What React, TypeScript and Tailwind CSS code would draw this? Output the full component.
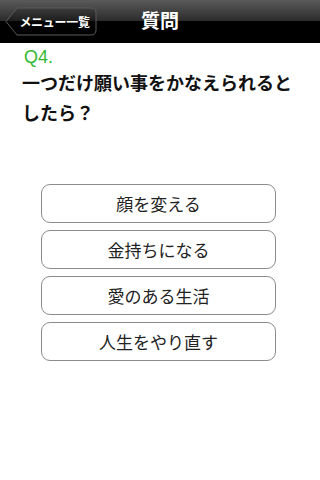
import React from "react";

const answers = ["顔を変える", "金持ちになる", "愛のある生活", "人生をやり直す"];

const font = {
  fontFamily: '"Noto Sans CJK JP", "Liberation Sans", sans-serif',
};

function BackButton() {
  return (
    <button className="relative ml-[5px] flex h-[29px] w-[92px] items-center justify-center pl-[7px]">
      <svg
        className="absolute inset-0"
        width="92"
        height="29"
        viewBox="0 0 92 29"
      >
        <defs>
          <linearGradient id="bb" x1="0" y1="0" x2="0" y2="1">
            <stop offset="0" stopColor="#3c3c3c" />
            <stop offset="0.5" stopColor="#1c1c1c" />
            <stop offset="0.5" stopColor="#050505" />
            <stop offset="1" stopColor="#000" />
          </linearGradient>
        </defs>
        <path
          d="M1 14.5 L12 1 H86 Q91 1 91 6 V23 Q91 28 86 28 H12 Z"
          fill="url(#bb)"
          stroke="#5a5a5a"
          strokeWidth="1"
        />
      </svg>
      <span className="relative text-[12px] font-bold tracking-[-0.3px] text-white">
        メニュー一覧
      </span>
    </button>
  );
}

export default function App() {
  return (
    <div className="h-[480px] w-[320px] bg-white" style={font}>
      {/* Nav bar */}
      <div className="relative flex h-[43px] items-center bg-[linear-gradient(to_bottom,#5a5a5a_0%,#2a2a2a_50%,#000_50%,#000_100%)]">
        <BackButton />
        <div className="absolute inset-x-0 top-0 flex h-[40px] items-center justify-center">
          <span className="text-[19px] font-bold text-white">質問</span>
        </div>
      </div>

      {/* Question */}
      <div className="pl-[24px] pr-[12px] pt-[4px]">
        <div
          className="text-[18px] leading-[20px] text-[#34b934]"
          style={{ fontFamily: '"Liberation Sans", sans-serif' }}
        >
          Q4.
        </div>
        <div className="-ml-[2px] text-[18px] font-bold leading-[30px] text-[#111]">
          一つだけ願い事をかなえられるとしたら？
        </div>
      </div>

      {/* Answers */}
      <div className="mt-[57px] flex flex-col gap-[7px] px-[41px]">
        {answers.map((a) => (
          <button
            key={a}
            className="flex h-[39px] w-[235px] items-center justify-center rounded-[9px] border-[1.5px] border-[#8c8c8c] bg-white text-[17px] text-[#222]"
          >
            {a}
          </button>
        ))}
      </div>
    </div>
  );
}
